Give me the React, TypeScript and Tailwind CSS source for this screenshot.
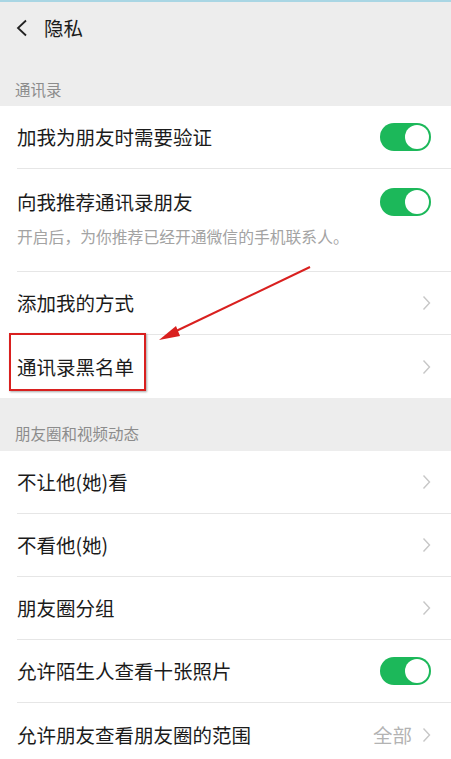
import { ReactNode } from 'react';

const font = { fontFamily: '"Noto Sans CJK SC", "Noto Sans", sans-serif' };

const Toggle = () => (
  <div className="w-[51px] h-[28px] rounded-full bg-[#1cb85a] flex items-center justify-end pr-[2px] shrink-0">
    <div className="w-[24px] h-[24px] rounded-full bg-white" />
  </div>
);

const Chevron = () => (
  <svg width="9" height="16" viewBox="0 0 9 16" className="shrink-0">
    <path d="M1.5 1.5 L7.5 8 L1.5 14.5" fill="none" stroke="#c7c7c7" strokeWidth="1.4" />
  </svg>
);

const Row = ({ label, right, divider = true }: { label: string; right: ReactNode; divider?: boolean }) => (
  <div className="pl-[17px]">
    <div className={`h-[63px] flex items-center justify-between pr-[20px] ${divider ? 'border-b border-[#e6e6e6]' : ''}`}>
      <span className="text-[19.5px] text-[#1b1b1b] leading-[26px]">{label}</span>
      {right}
    </div>
  </div>
);

const SectionLabel = ({ children, className }: { children: string; className: string }) => (
  <div className={`px-[15px] text-[15.5px] leading-[20px] text-[#8c8c8c] ${className}`}>{children}</div>
);

export default function App() {
  return (
    <div className="relative w-[451px] h-[759px] overflow-hidden bg-[#ededed]" style={font}>
      <div className="h-[2px] bg-[#a9d6e4]" />
      {/* Header */}
      <div className="h-[52px] flex items-center pl-[15px]">
        <svg width="14" height="18" viewBox="0 0 14 18">
          <path d="M11 1.5 L3 9 L11 16.5" fill="none" stroke="#222" strokeWidth="1.8" />
        </svg>
        <span className="ml-[15px] text-[19.5px] text-[#1b1b1b]">隐私</span>
      </div>

      <SectionLabel className="pt-[25px] pb-[7px]">通讯录</SectionLabel>

      <div className="bg-white">
        <Row label="加我为朋友时需要验证" right={<Toggle />} />
        <div className="pl-[17px]">
          <div className="border-b border-[#e6e6e6] pt-[19px] pb-[24px] pr-[20px]">
            <div className="flex items-center justify-between">
              <span className="text-[19.5px] text-[#1b1b1b] leading-[26px]">向我推荐通讯录朋友</span>
              <Toggle />
            </div>
            <div className="mt-[11px] text-[15.8px] leading-[20px] text-[#a3a3a3]">
              开启后，为你推荐已经开通微信的手机联系人。
            </div>
          </div>
        </div>
        <Row label="添加我的方式" right={<Chevron />} />
        <Row label="通讯录黑名单" right={<Chevron />} divider={false} />
      </div>

      <SectionLabel className="pt-[25px] pb-[8px]">朋友圈和视频动态</SectionLabel>

      <div className="bg-white">
        <Row label="不让他(她)看" right={<Chevron />} />
        <Row label="不看他(她)" right={<Chevron />} />
        <Row label="朋友圈分组" right={<Chevron />} />
        <Row label="允许陌生人查看十张照片" right={<Toggle />} />
        <Row
          label="允许朋友查看朋友圈的范围"
          divider={false}
          right={
            <div className="flex items-center gap-[10px]">
              <span className="text-[19.5px] text-[#b3b3b3]">全部</span>
              <Chevron />
            </div>
          }
        />
      </div>

      {/* Annotation */}
      <div className="absolute left-[9px] top-[333px] w-[137px] h-[58px] border-2 border-[#d9201f] shadow-[1px_1px_2px_rgba(0,0,0,0.35)]" />
      <svg className="absolute left-0 top-0" width="451" height="759" viewBox="0 0 451 759">
        <line x1="310" y1="267" x2="172" y2="333" stroke="#d9201f" strokeWidth="2" />
        <polygon points="159,340 176,326 180,336" fill="#d9201f" />
      </svg>
    </div>
  );
}
